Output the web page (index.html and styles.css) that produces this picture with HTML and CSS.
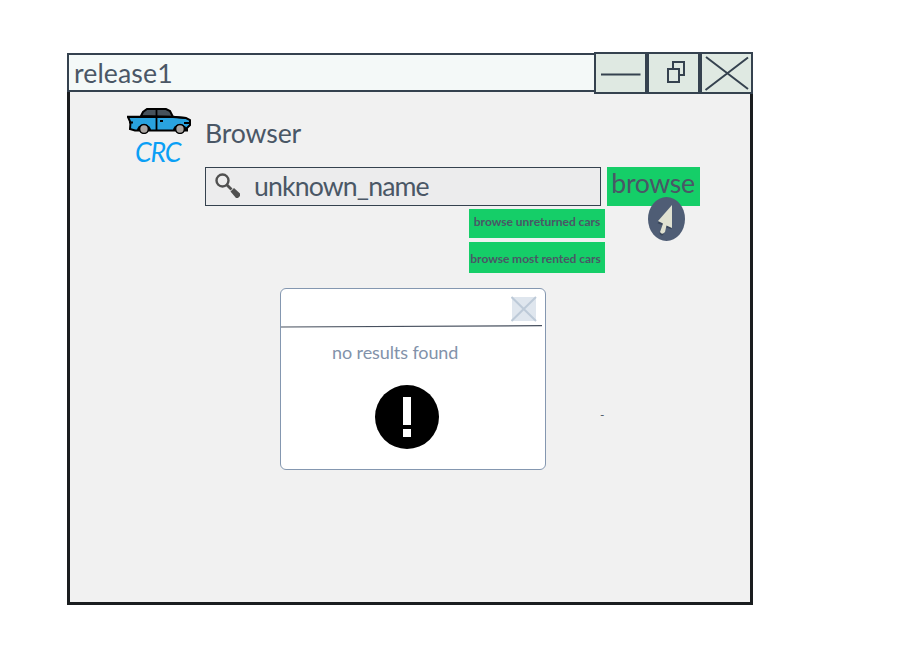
FILE: index.html
```html
<!DOCTYPE html>
<html lang="en">
<head>
<meta charset="utf-8">
<title>release1</title>
<link rel="stylesheet" href="styles.css">
</head>
<body>
<section class="window">
  <header class="titlebar">
    <h1 class="title">release1</h1>
    <div class="controls">
      <button class="control" aria-label="Minimize"><svg width="49" height="38" viewBox="0 0 49 38"><path d="M5 20.500H44.500"/></svg></button>
      <button class="control" aria-label="Restore"><svg width="49" height="38" viewBox="0 0 49 38"><path d="M24 14V8H35V21H31M19 15H30V28H19Z"/></svg></button>
      <button class="control" aria-label="Close"><svg width="49" height="38" viewBox="0 0 49 38"><path d="M4 3L46 35M46 3.500L3.500 36"/></svg></button>
    </div>
  </header>
  <main class="content">
    <div class="logo">
      <svg class="car" width="64" height="27" viewBox="0 0 64 27">
        <path d="M1 10L3.500 15.500L3 22L8 23.500H60V21L63 18V13L59 11L46 10Z" fill="#29a3df" stroke="#000" stroke-width="2"/>
        <path d="M14 9L16 5L20 2H39L43 4L46 10Z" fill="#46525b" stroke="#000" stroke-width="2"/>
        <path d="M0 9.700H46L59 11" fill="none" stroke="#000" stroke-width="1.800"/>
        <path d="M29.500 2V23M2 15.500H6M33 14H36M57 16H62" fill="none" stroke="#000" stroke-width="1.800"/>
        <path d="M10.500 23.500C11 15.500 23 15.500 23.500 23.500M46.500 23.500C47 15.500 59 15.500 59.500 23.500" fill="#000" stroke="#000"/>
        <circle cx="17" cy="22" r="4.400" fill="#aaa5a1" stroke="#000" stroke-width="1.500"/>
        <circle cx="53" cy="22" r="4.400" fill="#aaa5a1" stroke="#000" stroke-width="1.500"/>
      </svg>
      <span class="brand">CRC</span>
    </div>
    <div class="browser">
      <h2 class="heading">Browser</h2>
      <div class="search-row">
        <div class="search">
          <svg class="lens" width="26" height="26" viewBox="0 0 26 26"><circle cx="7.500" cy="7.500" r="6" fill="none" stroke="#505050" stroke-width="2.400"/><path d="M11.500 11.500L16.500 16.500" stroke="#505050" stroke-width="2.800"/><path d="M15.500 18.500L19 15L25 20.500V23L23 25H21Z" fill="#505050"/></svg>
          <span class="query">unknown_name</span>
        </div>
        <button class="browse">browse
          <svg class="cursor" width="38" height="44" viewBox="0 0 38 44"><ellipse cx="18.500" cy="22" rx="18.500" ry="22" fill="#4f5d75"/><path d="M24 8V31L18 29L16 36Q14 39 12 35L15 27L10 25Z" fill="#39465a" transform="translate(-.5 1.300)"/><path d="M24 8V31L18.500 28.500L17 35Q14 38.500 12 35L15 26.500L10 24Z" fill="#e0e1d1"/></svg>
        </button>
      </div>
      <div class="shortcuts">
        <button class="shortcut unreturned">browse unreturned cars</button>
        <button class="shortcut rented">browse most rented cars</button>
      </div>
      <div class="results">
        <section class="dialog">
          <header class="dialog-head">
            <svg class="dismiss" width="26" height="26" viewBox="0 0 26 26"><path d="M1 1H25V25H1Z" fill="#dfe6ee"/><path d="M.5 1L25 25M25 1L.5 25" stroke="#bdcad8" stroke-width="2"/></svg>
          </header>
          <svg class="rule" width="262" height="3" viewBox="0 0 262 3"><path d="M0 2L261 .7" stroke="#48515f" stroke-width="1.200"/></svg>
          <p class="message">no results found</p>
          <svg class="alert" width="64" height="64" viewBox="0 0 64 64"><circle cx="32" cy="32" r="32"/><path d="M28 12H36V40H28ZM28 44H36V52H28Z" fill="#fff"/></svg>
        </section>
        <span class="dash">-</span>
      </div>
    </div>
  </main>
</section>
</body>
</html>
```
FILE: styles.css
```css
* { box-sizing: border-box; }
body { margin: 0; padding: 53px 0 0 67px; background: #fff; color: #4a5766; font-family: Lato, sans-serif; }
h1, h2, p { margin: 0; font-weight: 400; }
button { padding: 0; border: 0; font-family: inherit; color: inherit; }
svg { display: block; flex: none; }
.window { width: 686px; height: 552px; }
.titlebar { display: flex; height: 39px; border: 2px solid #35424f; border-right: 0; background: #f4f9f8; }
.title { flex: 1; padding-left: 5px; font-size: 26.67px; line-height: 37px; letter-spacing: .1px; }
.controls { display: flex; height: 42px; margin-top: -3px; }
.control { width: 53px; height: 42px; border: 2px solid #35424f; background: #dfe9e2; }
.control svg { fill: none; stroke: #35424f; stroke-width: 2; }
.content { display: flex; gap: 14px; height: 513px; padding: 15px 0 0 57px; border: 3px solid #1a1d1f; border-top: 0; background: #f1f1f1; }
.logo { display: flex; flex-direction: column; width: 64px; }
.brand { margin-top: 2px; padding-left: 8px; color: #0a9ff5; font-size: 26.67px; font-style: italic; line-height: 32px; letter-spacing: -1.2px; }
.browser { width: 495px; padding-top: 10px; }
.heading { height: 50px; font-size: 26.67px; line-height: 32px; letter-spacing: -.15px; }
.search-row { display: flex; gap: 6px; height: 39px; }
.search { display: flex; width: 396px; border: 1px solid #35424f; background: #ececed; }
.lens { margin: 5px 13px 0 9px; }
.query { font-size: 26.67px; line-height: 37px; letter-spacing: -.87px; }
.browse { position: relative; width: 93px; padding: 0 1px 7px 0; background: #15ce68; font-size: 26.67px; line-height: 32px; letter-spacing: -.35px; }
.cursor { position: absolute; left: 41px; top: 30px; }
.shortcuts { display: flex; flex-direction: column; gap: 4px; width: 136px; margin: 3px 0 15px 264px; }
.shortcut { background: #15ce68; font-size: 12px; font-weight: 700; white-space: nowrap; }
.unreturned { height: 29px; padding: 0 0 5px; }
.rented { height: 31px; padding: 1px 3px 0 0; letter-spacing: -.04px; }
.results { display: flex; margin-left: 75px; }
.dialog { width: 266px; height: 182px; border: 1px solid #8497b0; border-radius: 6px; background: #fff; }
.dialog-head { display: flex; justify-content: flex-end; height: 36px; padding: 7px 8px 0 0; }
.message { padding: 13px 0 0 51px; color: #8292aa; font-size: 18px; line-height: 22px; letter-spacing: -.1px; }
.alert { margin: 22px 0 0 94px; }
.dash { margin: 119px 0 0 54px; font-size: 12px; line-height: 16px; }
```
